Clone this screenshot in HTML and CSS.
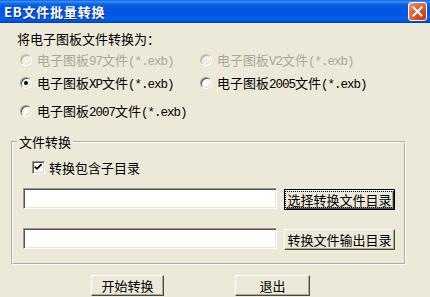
FILE: index.html
```html
<!DOCTYPE html>
<html lang="zh-CN">
<head>
<meta charset="utf-8">
<title>EB文件批量转换</title>
<link rel="stylesheet" href="styles.css">
</head>
<body>
<div class="window">
  <div class="titlebar">
    <span class="title">EB文件批量转换</span>
    <span class="close">
      <svg width="19" height="19" viewBox="0 0 19 19"><path d="M5.5 5.5 L13.5 13.5 M13.5 5.5 L5.5 13.5" stroke="#fff" stroke-width="2" stroke-linecap="square" fill="none"/></svg>
    </span>
  </div>
  <div class="content">
    <div class="prompt">将电子图板文件转换为：</div>
    <div class="options">
      <label class="opt disabled"><span class="radio"></span><span>电子图板<span class="lat">97</span>文件<span class="lat">(*.exb)</span></span></label>
      <label class="opt disabled"><span class="radio"></span><span>电子图板<span class="lat">V2</span>文件<span class="lat">(*.exb)</span></span></label>
      <label class="opt"><span class="radio checked"></span><span>电子图板<span class="lat">XP</span>文件<span class="lat">(*.exb)</span></span></label>
      <label class="opt"><span class="radio"></span><span>电子图板<span class="lat">2005</span>文件<span class="lat">(*.exb)</span></span></label>
      <label class="opt"><span class="radio"></span><span>电子图板<span class="lat">2007</span>文件<span class="lat">(*.exb)</span></span></label>
    </div>
    <fieldset class="group">
      <legend>文件转换</legend>
      <div class="check-row">
        <span class="checkbox"><svg width="11" height="11" viewBox="0 0 11 11"><path d="M1.8 4.6 L4 6.8 L8.6 2.2" stroke="#000" stroke-width="1.8" fill="none"/></svg></span>
        转换包含子目录
      </div>
      <div class="path-row">
        <div class="input"></div>
        <button class="btn wide focused"><span class="focus">选择转换文件目录</span></button>
      </div>
      <div class="path-row second">
        <div class="input"></div>
        <button class="btn wide">转换文件输出目录</button>
      </div>
    </fieldset>
    <div class="actions">
      <button class="btn start">开始转换</button>
      <button class="btn quit">退出</button>
    </div>
  </div>
</div>
</body>
</html>
```

FILE: styles.css
```css
html, body {
  margin: 0;
  padding: 0;
}
body {
  width: 430px;
  height: 297px;
  overflow: hidden;
  background: #ece9d8;
  font-family: "Noto Sans CJK SC", "Liberation Sans", sans-serif;
  font-size: 13px;
  line-height: 15px;
  color: #000;
}
.window {
  display: flex;
  flex-direction: column;
}
.titlebar {
  height: 23px;
  display: flex;
  align-items: center;
  justify-content: space-between;
  padding-left: 4px;
  background: linear-gradient(to bottom, #0a5ae0 0%, #3d8ff5 6%, #1f76ee 12%, #075fe4 22%, #0055e3 45%, #0058e8 65%, #0561ec 80%, #0354dc 92%, #003ea8 100%);
}
.title {
  color: #fff;
  font-weight: bold;
  font-size: 13px;
  text-shadow: 1px 1px 0 #0b2a8a;
  letter-spacing: 0.8px;
}
.close {
  width: 19px;
  height: 19px;
  margin-right: 3px;
  box-sizing: border-box;
  border: 1px solid #fff;
  border-radius: 3px;
  background: radial-gradient(circle at 85% 85%, #c43a10 0%, #dc5a2a 50%, #e88060 80%, #f4b8a0 100%);
  display: flex;
  align-items: center;
  justify-content: center;
}
.close svg {
  display: block;
  margin: -1px;
}
.content {
  padding: 8px 24px 0 11px;
  display: flex;
  flex-direction: column;
}
.prompt {
  margin-left: 6px;
  height: 15px;
}
.options {
  margin: 6px 0 0 9px;
  display: grid;
  grid-template-columns: 180px auto;
  grid-template-rows: 23px 28px 15px;
}
.opt {
  display: flex;
  align-items: flex-start;
  gap: 5px;
  height: 15px;
  white-space: nowrap;
}
.lat {
  font-family: "Liberation Mono", "DejaVu Sans Mono", monospace;
  font-size: 12.5px;
  letter-spacing: -1px;
}
.opt.disabled {
  color: #aca899;
}
.radio {
  flex: none;
  width: 12px;
  height: 12px;
  box-sizing: border-box;
  margin-top: 2px;
  border-radius: 50%;
  border: 1px solid;
  border-color: #9a988c #fff #fff #9a988c;
  box-shadow: inset 1px 1px 0 #55534a, inset -1px -1px 0 #d8d5c6;
  background: #fff;
  position: relative;
}
.opt.disabled .radio {
  background: #f2f0e6;
  border-color: #c4c2b6 #fff #fff #c4c2b6;
  box-shadow: inset 1px 1px 0 #b4b2a6, inset -1px -1px 0 #e4e2d6;
}
.radio.checked::after {
  content: "";
  position: absolute;
  left: 3px;
  top: 3px;
  width: 4px;
  height: 4px;
  border-radius: 50%;
  background: #000;
}
.group {
  margin: 16px 0 0 0;
  padding: 11px 0 13px 0;
  border: 2px groove #fff;
  min-width: 0;
}
.group legend {
  margin-left: 4px;
  padding: 0 2px;
  line-height: 15px;
}
.check-row {
  margin-left: 19px;
  height: 15px;
  display: flex;
  align-items: center;
  gap: 4px;
}
.checkbox {
  flex: none;
  width: 13px;
  height: 13px;
  box-sizing: border-box;
  border: 1px solid;
  border-color: #9a988c #fff #fff #9a988c;
  box-shadow: inset 1px 1px 0 #55534a, inset -1px -1px 0 #d8d5c6;
  background: #fff;
  display: flex;
  align-items: center;
  justify-content: center;
}
.checkbox svg {
  display: block;
}
.path-row {
  margin: 13px 0 0 10px;
  display: flex;
  align-items: flex-start;
  gap: 7px;
}
.path-row.second {
  margin-top: 18px;
}
.input {
  width: 254px;
  height: 21px;
  box-sizing: border-box;
  border: 1px solid;
  border-color: #9a988c #fff #fff #9a988c;
  box-shadow: inset 1px 1px 0 #55534a, inset -1px -1px 0 #ece9d8;
  background: #fff;
}
.btn {
  height: 21px;
  box-sizing: border-box;
  margin: 0;
  padding: 0;
  font: inherit;
  color: #000;
  background: #ece9d8;
  border: 1px solid;
  border-color: #fff #4a4840 #4a4840 #fff;
  box-shadow: inset -1px -1px 0 #aca899;
  display: flex;
  align-items: center;
  justify-content: center;
  white-space: nowrap;
}
.btn.wide {
  width: 111px;
  margin-top: 1px;
}
.btn.focused {
  border: 1px solid #000;
  box-shadow: inset 1px 1px 0 #fff, inset -1px -1px 0 #4a4840, inset -2px -2px 0 #aca899;
}
.focus {
  outline: 1px dotted #000;
  outline-offset: 0;
  line-height: 15px;
  padding: 0 1px;
}
.actions {
  margin: 10px 0 0 80px;
  display: flex;
  gap: 71px;
}
.btn.start {
  width: 73px;
}
.btn.quit {
  width: 75px;
}
```
